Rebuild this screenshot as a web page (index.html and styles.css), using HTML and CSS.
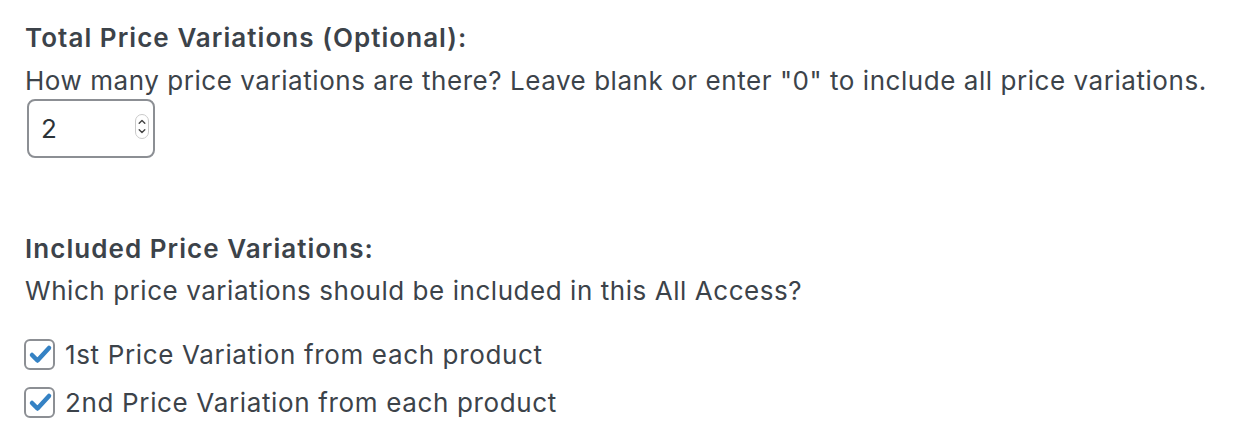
FILE: index.html
```html
<!DOCTYPE html>
<html>
<head>
<meta charset="utf-8">
<link rel="stylesheet" href="styles.css">
</head>
<body>
<div class="form">
  <div class="field">
    <div class="label">Total Price Variations (Optional):</div>
    <div class="desc first">How many price variations are there? Leave blank or enter "0" to include all price variations.</div>
    <div class="number">
      <input class="number-input" type="text" value="2">
      <svg class="spinner" width="14" height="25" viewBox="0 0 14 25">
        <rect x="0.5" y="0.5" width="13" height="24" rx="6.5" fill="#fff" stroke="#c9c9c9"/>
        <path d="M4.2 9.2 L7 6.4 L9.8 9.2" fill="none" stroke="#444" stroke-width="1.4" stroke-linecap="round" stroke-linejoin="round"/>
        <path d="M4.2 15.8 L7 18.6 L9.8 15.8" fill="none" stroke="#444" stroke-width="1.4" stroke-linecap="round" stroke-linejoin="round"/>
      </svg>
    </div>
  </div>
  <div class="field second">
    <div class="label">Included Price Variations:</div>
    <div class="desc">Which price variations should be included in this All Access?</div>
    <ul class="checks">
      <li class="check-row">
        <span class="box"><svg width="27" height="27" viewBox="0 0 27 27"><path d="M6 14 L11.5 19.5 L23 7" fill="none" stroke="#3582c4" stroke-width="4.5" stroke-linecap="round" stroke-linejoin="round"/></svg></span>
        <span class="check-text">1st Price Variation from each product</span>
      </li>
      <li class="check-row">
        <span class="box"><svg width="27" height="27" viewBox="0 0 27 27"><path d="M6 14 L11.5 19.5 L23 7" fill="none" stroke="#3582c4" stroke-width="4.5" stroke-linecap="round" stroke-linejoin="round"/></svg></span>
        <span class="check-text">2nd Price Variation from each product</span>
      </li>
    </ul>
  </div>
</div>
</body>
</html>
```

FILE: styles.css
```css
html, body {
  margin: 0;
  padding: 0;
  background: #fff;
}
body {
  font-family: Inter, "Noto Sans", "Liberation Sans", sans-serif;
  font-size: 26px;
  letter-spacing: 0.55px;
  color: #3c434a;
}
.form {
  padding: 18px 0 0 25px;
}
.label {
  font-weight: 600;
  letter-spacing: 1.05px;
  line-height: 39px;
}
.desc {
  line-height: 39px;
  margin-top: 3px;
}
.desc.first {
  margin-top: 6px;
  line-height: 36px;
}
.number {
  position: relative;
  width: 128px;
  height: 59px;
  margin-left: 2px;
}
.number-input {
  box-sizing: border-box;
  width: 128px;
  height: 59px;
  border: 2px solid #8c8f94;
  border-radius: 8px;
  padding: 0 0 0 12px;
  margin: 0;
  font-family: inherit;
  font-size: 26px;
  color: #2c3338;
  background: #fff;
  outline: none;
}
.spinner {
  position: absolute;
  left: 108px;
  top: 15px;
}
.second {
  margin-top: 71px;
}
.checks {
  list-style: none;
  margin: 20px 0 0 0;
  padding: 0;
}
.check-row {
  display: flex;
  align-items: center;
  height: 48px;
}
.box {
  box-sizing: border-box;
  width: 31px;
  height: 31px;
  border: 2px solid #8c8f94;
  border-radius: 6px;
  display: flex;
  align-items: center;
  justify-content: center;
  margin-left: -1px;
  margin-right: 10px;
  background: #fff;
}
.box svg {
  display: block;
}
.check-text {
  line-height: 39px;
  letter-spacing: 0.65px;
}
```
